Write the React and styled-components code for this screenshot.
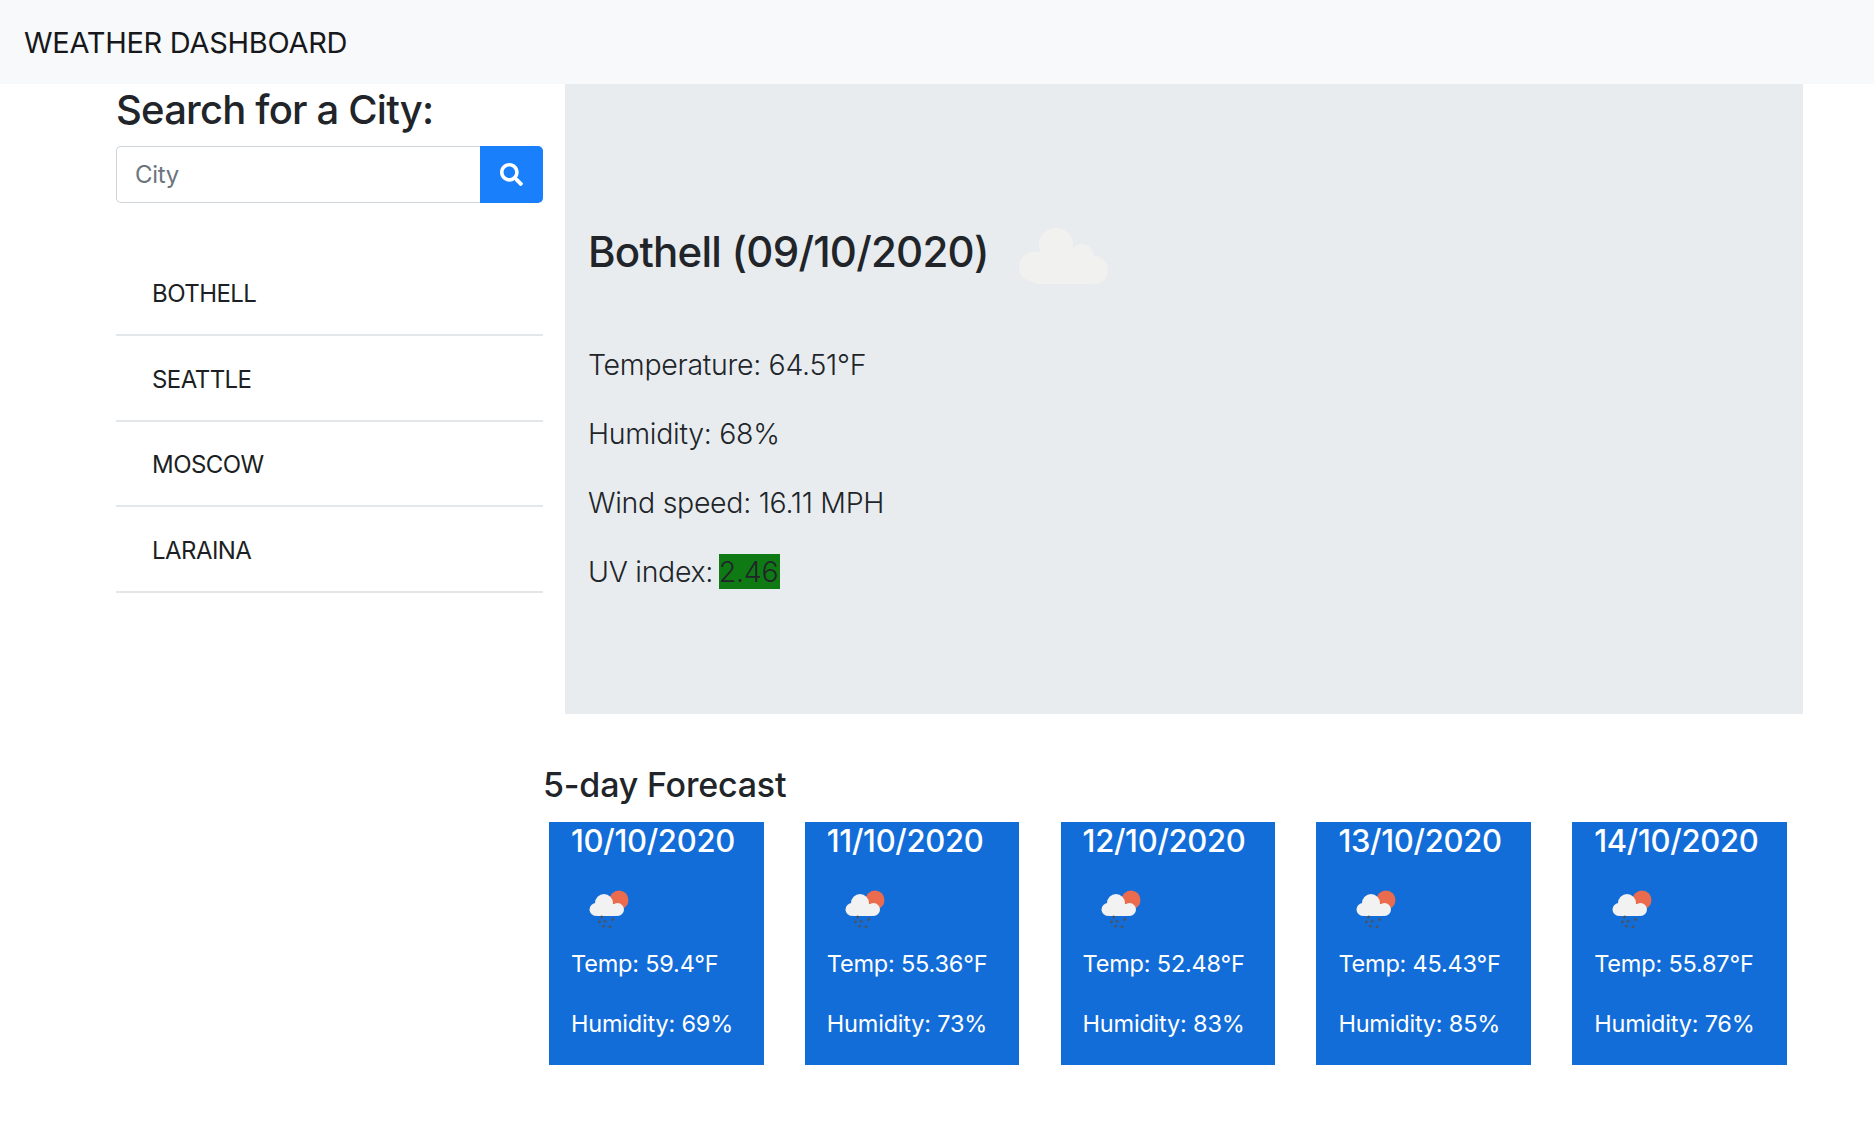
import React from 'react';
import styled, { createGlobalStyle } from 'styled-components';
import { FaSearch } from 'react-icons/fa';

const GlobalStyle = createGlobalStyle`
  * { box-sizing: border-box; }
  body {
    margin: 0;
    background: #fff;
    color: #212529;
    font-family: Inter, "Liberation Sans", sans-serif;
  }
`;

const Navbar = styled.nav`
  display: flex;
  align-items: center;
  height: 84px;
  padding-left: 24px;
  background: #f8f9fa;
`;

const Brand = styled.span`
  font-size: 29px;
  line-height: 1;
  letter-spacing: -0.28px;
  color: #16181b;
`;

const Content = styled.div`
  display: flex;
  gap: 22px;
  padding: 0 71px 0 116px;
`;

const Sidebar = styled.aside`
  flex: 0 0 427px;
  min-width: 0;
`;

const SearchTitle = styled.h2`
  margin: 2px 0 12px;
  font-size: 40px;
  line-height: 48px;
  font-weight: 500;
  letter-spacing: -0.8px;
`;

const SearchForm = styled.form`
  display: flex;
  height: 57px;
`;

const CityInput = styled.input`
  flex: 1;
  min-width: 0;
  padding: 0 18px;
  border: 1px solid #ced4da;
  border-right: 0;
  border-radius: 5px 0 0 5px;
  font: 400 24px Inter, "Liberation Sans", sans-serif;
  letter-spacing: -0.3px;
  color: #495057;
  outline: none;

  &::placeholder {
    color: #6c757d;
  }
`;

const SearchButton = styled.button`
  display: flex;
  align-items: center;
  justify-content: center;
  width: 63px;
  border: 0;
  border-radius: 0 5px 5px 0;
  background: #1a7ffa;
  color: #fff;
`;

const CityList = styled.ul`
  margin: 47.5px 0 0;
  padding: 0;
  list-style: none;
`;

const CityItem = styled.li`
  display: flex;
  align-items: center;
  height: 85.5px;
  padding: 3px 0 0 36px;
  border-bottom: 2px solid #e4e7ea;
  font-size: 24px;
  letter-spacing: -0.55px;
  color: #1c1f23;
`;

const Current = styled.main`
  flex: 1;
  height: 630px;
  padding: 127px 23px 0;
  background: #e8ecef;
`;

const CityHeading = styled.h1`
  display: flex;
  align-items: center;
  gap: 30px;
  margin: 0 0 39px;
  height: 80px;
  font-size: 42px;
  font-weight: 500;
  letter-spacing: -0.75px;
`;

const Stat = styled.p`
  margin: 0;
  height: 69px;
  font-size: 28.5px;
  line-height: 69px;
  font-weight: 300;
  letter-spacing: -0.3px;
`;

const UvBadge = styled.span`
  display: inline-block;
  height: 35px;
  margin-left: -2px;
  padding-right: 2px;
  line-height: 35px;
  background: #0f7a14;
`;

const Forecast = styled.section`
  margin: 49px 0 0 543px;
`;

const ForecastTitle = styled.h3`
  margin: 0 0 15px;
  font-size: 34px;
  line-height: 44px;
  font-weight: 500;
  letter-spacing: -0.2px;
`;

const CardRow = styled.div`
  display: flex;
  gap: 41.3px;
  margin-left: 6px;
`;

const Card = styled.article`
  flex: 0 0 214.5px;
  height: 243px;
  padding: 1px 22px 0;
  background: #126dd9;
  color: #fff;
`;

const CardDate = styled.div`
  height: 36px;
  font-size: 31px;
  line-height: 36px;
  font-weight: 500;
  letter-spacing: -0.3px;
`;

const CardIcon = styled.div`
  height: 75px;
  padding: 30px 0 0 18px;
`;

const CardLine = styled.p`
  margin: 0;
  height: 60px;
  font-size: 23.5px;
  line-height: 60px;
  letter-spacing: -0.2px;
`;

const Cloud = styled.svg`
  margin-top: 10px;
  flex: none;
`;

const Rain = styled.svg`
  filter: blur(0.4px);
`;

const CloudIcon = () => (
  <Cloud width="90" height="56" viewBox="0 0 90 56" fill="#f1f1ef">
    <circle cx="37" cy="17" r="17" />
    <circle cx="63" cy="27" r="11" />
    <circle cx="15" cy="39" r="15" />
    <circle cx="75" cy="42" r="14" />
    <rect x="15" y="24" width="60" height="32" rx="4" />
  </Cloud>
);

const RainIcon = () => (
  <Rain width="42" height="40" viewBox="0 0 42 40">
    <circle cx="30" cy="11" r="9.5" fill="#ea6b4d" />
    <g fill="#f2f2f2">
      <circle cx="15" cy="14" r="9" />
      <circle cx="7" cy="20.5" r="6.5" />
      <circle cx="28.5" cy="20.5" r="6.5" />
      <rect x="7" y="15" width="21.5" height="12" rx="2" />
    </g>
    <g fill="#4a5560">
      <circle cx="12.7" cy="28" r="1.5" />
      <circle cx="23.7" cy="30.7" r="1.4" />
      <circle cx="16" cy="32.3" r="1.4" />
      <circle cx="10.3" cy="33" r="1.4" />
      <circle cx="21" cy="38" r="1.4" />
      <circle cx="14.3" cy="37.3" r="1.4" />
    </g>
  </Rain>
);

const cities = ['BOTHELL', 'SEATTLE', 'MOSCOW', 'LARAINA'];

const days = [
  { date: '10/10/2020', temp: '59.4', humidity: 69 },
  { date: '11/10/2020', temp: '55.36', humidity: 73 },
  { date: '12/10/2020', temp: '52.48', humidity: 83 },
  { date: '13/10/2020', temp: '45.43', humidity: 85 },
  { date: '14/10/2020', temp: '55.87', humidity: 76 },
];

const App = () => (
  <>
    <GlobalStyle />
    <Navbar>
      <Brand>WEATHER DASHBOARD</Brand>
    </Navbar>
    <Content>
      <Sidebar>
        <SearchTitle>Search for a City:</SearchTitle>
        <SearchForm>
          <CityInput placeholder="City" />
          <SearchButton type="button">
            <FaSearch size={23} />
          </SearchButton>
        </SearchForm>
        <CityList>
          {cities.map(city => (
            <CityItem key={city}>{city}</CityItem>
          ))}
        </CityList>
      </Sidebar>
      <Current>
        <CityHeading>
          Bothell (09/10/2020)
          <CloudIcon />
        </CityHeading>
        <Stat>Temperature: 64.51°F</Stat>
        <Stat>Humidity: 68%</Stat>
        <Stat>Wind speed: 16.11 MPH</Stat>
        <Stat>
          UV index: <UvBadge>2.46</UvBadge>
        </Stat>
      </Current>
    </Content>
    <Forecast>
      <ForecastTitle>5-day Forecast</ForecastTitle>
      <CardRow>
        {days.map(day => (
          <Card key={day.date}>
            <CardDate>{day.date}</CardDate>
            <CardIcon>
              <RainIcon />
            </CardIcon>
            <CardLine>Temp: {day.temp}°F</CardLine>
            <CardLine>Humidity: {day.humidity}%</CardLine>
          </Card>
        ))}
      </CardRow>
    </Forecast>
  </>
);

export default App;
